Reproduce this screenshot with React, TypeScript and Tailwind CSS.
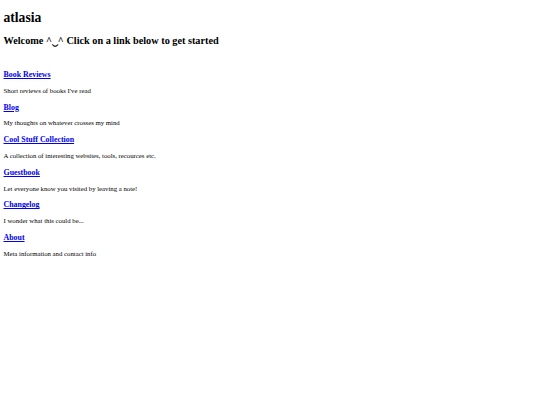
const links = [
  { title: "Book Reviews", desc: "Short reviews of books I've read" },
  { title: "Blog", desc: "My thoughts on whatever crosses my mind" },
  { title: "Cool Stuff Collection", desc: "A collection of interesting websites, tools, recources etc." },
  { title: "Guestbook", desc: "Let everyone know you visited by leaving a note!" },
  { title: "Changelog", desc: "I wonder what this could be..." },
  { title: "About", desc: "Meta information and contact info" },
];

export default function App() {
  return (
    <div className="min-h-[405px] w-[540px] bg-white px-[3.5px] py-[1px] text-black font-['Liberation_Serif',serif]">
      <h1 className="mt-[9px] text-[13.6px] leading-[1.15] font-bold">atlasia</h1>
      <h2 className="mt-[9px] text-[10.25px] leading-[1.15] font-bold">
        Welcome ^‿^ Click on a link below to get started
      </h2>

      <div className="mt-[23.5px]">
        {links.map((l) => (
          <div key={l.title}>
            <h3 className="text-[7.9px] leading-[1.15] font-bold">
              <a href="#" className="text-[#0000ee] underline">
                {l.title}
              </a>
            </h3>
            <p className="mt-[7.9px] mb-[7.9px] text-[6.75px] leading-[1.15]">{l.desc}</p>
          </div>
        ))}
      </div>
    </div>
  );
}
